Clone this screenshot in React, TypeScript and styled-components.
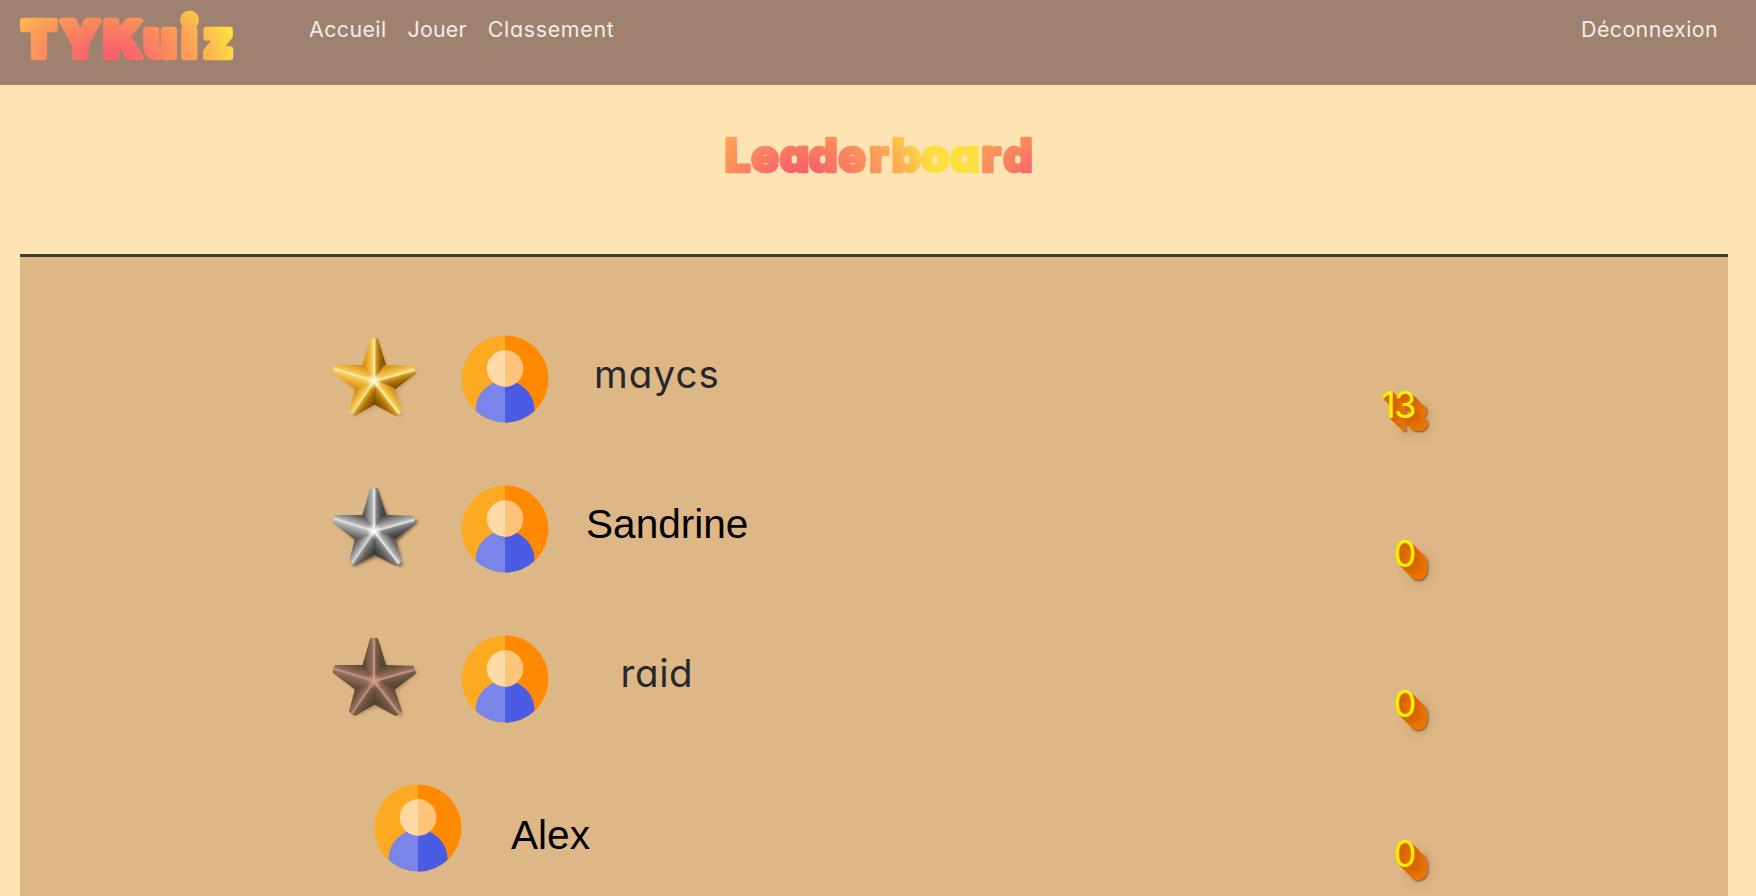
import React, { useId } from "react";
import styled, { createGlobalStyle } from "styled-components";

const GlobalStyle = createGlobalStyle`
  * { box-sizing: border-box; }
  body {
    margin: 0;
    background: #fee4b3;
    font-family: Inter, "Open Sans", sans-serif;
    font-feature-settings: "cv11" 1, "ss03" 1;
    overflow: hidden;
  }
`;

const Page = styled.div`
  height: 896px;
  overflow: hidden;
  display: flex;
  flex-direction: column;
`;

const NavBar = styled.nav`
  flex: none;
  height: 85px;
  background: #9e816f;
  display: flex;
  align-items: flex-start;
  padding: 0 38px 0 16px;
`;

const LogoSvg = styled.svg`
  display: block;
  width: 224px;
  height: 70px;
`;

const NavLinks = styled.div`
  display: flex;
  gap: 21px;
  margin-left: 69px;
  flex: 1;
`;

const NavLink = styled.a<{ $spacing: number }>`
  color: #f3ece7;
  font-size: 21.4px;
  font-weight: 400;
  line-height: 26px;
  margin-top: 16px;
  letter-spacing: ${(p) => p.$spacing}px;
  white-space: nowrap;
`;

const Title = styled.h1`
  flex: none;
  margin: 0;
  height: 169px;
  padding-top: 40px;
  display: flex;
  justify-content: center;
`;

const TitleSvg = styled.svg`
  display: block;
  width: 330px;
  height: 60px;
`;

const Board = styled.main`
  flex: none;
  height: 660px;
  margin: 0 28px 0 20px;
  border-top: 3px solid #403c3b;
  background: #deb786;
  padding-top: 47.5px;
`;

const Row = styled.div<{ $indent: number }>`
  height: 149.7px;
  padding: 0 313.5px 0 ${(p) => p.$indent}px;
  display: flex;
  align-items: center;
`;

const StarSvg = styled.svg`
  flex: none;
  width: 90px;
  height: 90px;
  margin-right: 41px;
`;

const AvatarSvg = styled.svg`
  flex: none;
  width: 88px;
  height: 88px;
`;

const Name = styled.span<{ $plain: boolean; $gap: number; $drop: number; $spacing: number }>`
  flex: 1;
  margin-left: ${(p) => p.$gap}px;
  padding-top: ${(p) => p.$drop}px;
  height: 100%;
  font-family: ${(p) => (p.$plain ? '"Liberation Sans", Arial, sans-serif' : "Inter, sans-serif")};
  font-size: ${(p) => (p.$plain ? 40.6 : 38.5)}px;
  line-height: 48px;
  letter-spacing: ${(p) => p.$spacing}px;
  color: ${(p) => (p.$plain ? "#000" : "#26282b")};
`;

const extrusion = Array.from({ length: 13 }, (_, i) => {
  const step = i + 1;
  const green = Math.round(98 + i * 1.8);
  return `${step}px ${step}px 0 rgb(${212 + i * 2}, ${green}, 2)`;
}).join(", ");

const Score = styled.span`
  height: 100%;
  padding-top: 76px;
  font-size: 36.5px;
  font-weight: 400;
  line-height: 48px;
  letter-spacing: -2px;
  color: #fff000;
  text-shadow: ${extrusion}, 14px 14px 2px rgba(60, 30, 0, 0.65), 14px 14px 12px rgba(80, 40, 0, 0.35);
`;

function SunsetStops() {
  return (
    <>
      <stop offset="0" stopColor="#f75b6c" />
      <stop offset="0.2" stopColor="#f8676a" />
      <stop offset="0.6" stopColor="#fb9859" />
      <stop offset="0.78" stopColor="#fcb351" />
      <stop offset="1" stopColor="#fddf40" />
    </>
  );
}

function Logo() {
  return (
    <LogoSvg viewBox="16 0 224 70">
      <defs>
        <radialGradient id="logoFill" gradientUnits="userSpaceOnUse" cx="0" cy="0" r="1"
          gradientTransform="translate(107 64) scale(130 92)">
          <SunsetStops />
        </radialGradient>
      </defs>
      <g fill="url(#logoFill)" stroke="url(#logoFill)" strokeWidth="6.6" strokeLinejoin="round">
        <text x="22 61 104 144 182 203.5" y="56.5" fontSize="49.5" fontWeight="900">TYKuiz</text>
        <circle cx="189.5" cy="20" r="6.2" />
      </g>
    </LogoSvg>
  );
}

function Heading() {
  return (
    <TitleSvg viewBox="713 125 330 60">
      <defs>
        <radialGradient id="titleFill" gradientUnits="userSpaceOnUse" cx="0" cy="0" r="1"
          gradientTransform="translate(799 184) scale(136 100)">
          <SunsetStops />
        </radialGradient>
        <radialGradient id="titleRepeat" gradientUnits="userSpaceOnUse" cx="0" cy="0" r="1"
          gradientTransform="translate(1054 184) scale(136 100)">
          <SunsetStops />
        </radialGradient>
      </defs>
      <text x="724.5 751 779.5 808 838 869 891.5 921 950 981 1003" y="171.5" fontSize="46.5" fontWeight="900"
        strokeWidth="2.3" strokeLinejoin="round">
        <tspan fill="url(#titleFill)" stroke="url(#titleFill)">Leaderboa</tspan>
        <tspan fill="url(#titleRepeat)" stroke="url(#titleRepeat)">rd</tspan>
      </text>
    </TitleSvg>
  );
}

type Metal = { light: string[]; dark: string[]; ridge: string; glow: string; shadow: number };

const metals: Record<string, Metal> = {
  gold: { light: ["#f7d873", "#edb135", "#d68f14"], dark: ["#e9b840", "#a96c08", "#7d4a02"], ridge: "#ffeb9c", glow: "#fffbe6", shadow: 0.15 },
  silver: { light: ["#c9c9c9", "#8e8e8e", "#555555"], dark: ["#a2a2a2", "#5e5e5e", "#383838"], ridge: "#e2e2e2", glow: "#ffffff", shadow: 0.6 },
  bronze: { light: ["#a07767", "#7c5e49", "#5b4833"], dark: ["#85654f", "#63503a", "#50412d"], ridge: "#c99588", glow: "#d39c8e", shadow: 0.25 },
};

const CENTER = [44, 47];
const TIPS = [[44, 5.5], [83.5, 36], [68.5, 78.5], [22.5, 78.5], [5, 35]];
const NOTCHES = [[55, 32.5], [63, 55], [44.5, 69], [26.5, 55], [33.5, 32.5]];

/* The foot of the perpendicular from a notch to its arm's ridge starts the shading. */
function shadeAxis(tip: number[], notch: number[]) {
  const dx = tip[0] - CENTER[0];
  const dy = tip[1] - CENTER[1];
  const t = ((notch[0] - CENTER[0]) * dx + (notch[1] - CENTER[1]) * dy) / (dx * dx + dy * dy);
  return [CENTER[0] + dx * t, CENTER[1] + dy * t];
}

/* Arms keep some width at the tip, so each facet ends in a short blunt edge. */
function bluntTip(tip: number[], notch: number[]) {
  const foot = shadeAxis(tip, notch);
  return [tip[0] + (notch[0] - foot[0]) * 0.26, tip[1] + (notch[1] - foot[1]) * 0.26];
}

function Star({ metal }: { metal: string }) {
  const id = useId();
  const tone = metals[metal];
  const facets = TIPS.flatMap((tip, i) => [
    { tip, notch: NOTCHES[i], dark: i < 3 },
    { tip, notch: NOTCHES[(i + 4) % 5], dark: i === 3 },
  ]);
  const outline = TIPS.map((t, i) => `${t} ${NOTCHES[i]}`).join(" ");
  return (
    <StarSvg viewBox="0 0 90 90">
      <defs>
        {facets.map((f, i) => {
          const start = shadeAxis(f.tip, f.notch);
          const colors = f.dark ? tone.dark : tone.light;
          return (
            <linearGradient key={i} id={`${id}f${i}`} gradientUnits="userSpaceOnUse"
              x1={start[0]} y1={start[1]} x2={f.notch[0]} y2={f.notch[1]}>
              <stop offset="0" stopColor={colors[0]} />
              <stop offset="0.5" stopColor={colors[1]} />
              <stop offset="1" stopColor={colors[2]} />
            </linearGradient>
          );
        })}
        <radialGradient id={`${id}g`}>
          <stop offset="0" stopColor={tone.glow} />
          <stop offset="1" stopColor={tone.glow} stopOpacity="0" />
        </radialGradient>
        <filter id={`${id}s`} x="-20%" y="-20%" width="140%" height="140%">
          <feGaussianBlur stdDeviation="1.4" />
        </filter>
      </defs>
      <polygon points={outline} transform="translate(2 2)" fill="#3a2510" stroke="#3a2510" strokeWidth="4"
        strokeLinejoin="round" opacity={tone.shadow} filter={`url(#${id}s)`} />
      {facets.map((f, i) => (
        <polygon key={i} points={`${CENTER} ${f.tip} ${bluntTip(f.tip, f.notch)} ${f.notch}`}
          fill={`url(#${id}f${i})`} stroke={`url(#${id}f${i})`} strokeWidth="2.8" strokeLinejoin="round" />
      ))}
      {TIPS.map((t, i) => (
        <line key={i} x1={CENTER[0]} y1={CENTER[1]} x2={t[0]} y2={t[1]} stroke={tone.ridge}
          strokeWidth="2.2" strokeLinecap="round" opacity="0.8" />
      ))}
      <circle cx={CENTER[0]} cy={CENTER[1]} r="8" fill={`url(#${id}g)`} />
    </StarSvg>
  );
}

function Avatar() {
  const id = useId();
  return (
    <AvatarSvg viewBox="0 0 88 88">
      <defs>
        <clipPath id={`${id}disc`}><circle cx="44" cy="44" r="43.5" /></clipPath>
        <clipPath id={`${id}half`}><rect x="44" y="0" width="44" height="88" /></clipPath>
      </defs>
      <circle cx="44" cy="44" r="43.5" fill="#fdaa23" />
      <g clipPath={`url(#${id}half)`}><circle cx="44" cy="44" r="43.5" fill="#ff8a02" /></g>
      <g clipPath={`url(#${id}disc)`}>
        <circle cx="44" cy="75" r="29.5" fill="#7a85ea" />
        <g clipPath={`url(#${id}half)`}><circle cx="44" cy="75" r="29.5" fill="#4b5be4" /></g>
      </g>
      <circle cx="44" cy="33.5" r="18.2" fill="#fddaa6" />
      <g clipPath={`url(#${id}half)`}><circle cx="44" cy="33.5" r="18.2" fill="#ffc379" /></g>
    </AvatarSvg>
  );
}

const players = [
  { name: "maycs", score: 13, metal: "gold", plain: false, indent: 310, gap: 45, drop: 45, spacing: 1.1 },
  { name: "Sandrine", score: 0, metal: "silver", plain: true, indent: 310, gap: 37, drop: 46, spacing: 0 },
  { name: "raid", score: 0, metal: "bronze", plain: false, indent: 310, gap: 71.5, drop: 45, spacing: 0.6 },
  { name: "Alex", score: 0, metal: null, plain: true, indent: 354, gap: 49, drop: 57, spacing: 0 },
];

export default function App() {
  return (
    <Page>
      <GlobalStyle />
      <NavBar>
        <Logo />
        <NavLinks>
          <NavLink $spacing={0.4}>Accueil</NavLink>
          <NavLink $spacing={0.2}>Jouer</NavLink>
          <NavLink $spacing={0.7}>Classement</NavLink>
        </NavLinks>
        <NavLink $spacing={0.4}>Déconnexion</NavLink>
      </NavBar>
      <Title><Heading /></Title>
      <Board>
        {players.map((p) => (
          <Row key={p.name} $indent={p.indent}>
            {p.metal && <Star metal={p.metal} />}
            <Avatar />
            <Name $plain={p.plain} $gap={p.gap} $drop={p.drop} $spacing={p.spacing}>{p.name}</Name>
            <Score>{p.score}</Score>
          </Row>
        ))}
      </Board>
    </Page>
  );
}
